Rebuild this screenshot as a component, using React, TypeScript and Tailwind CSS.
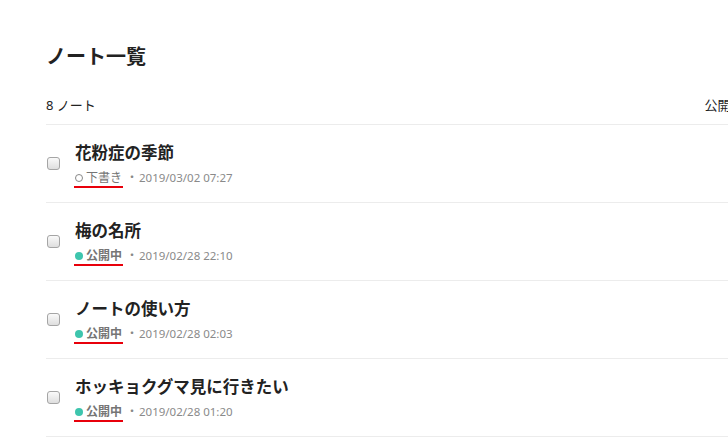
const notes = [
  { title: "花粉症の季節", status: "draft", date: "2019/03/02 07:27" },
  { title: "梅の名所", status: "public", date: "2019/02/28 22:10" },
  { title: "ノートの使い方", status: "public", date: "2019/02/28 02:03" },
  { title: "ホッキョクグマ見に行きたい", status: "public", date: "2019/02/28 01:20" },
];

const NoteRow = ({ note }: { note: (typeof notes)[number] }) => {
  const isDraft = note.status === "draft";
  return (
    <div className="flex h-[78px] items-start border-b border-[#ececec]">
      <div className="ml-[1px] mt-[32px] h-[13px] w-[13px] shrink-0 rounded-[3px] border border-[#a5a5a5] bg-gradient-to-b from-[#fafafa] to-[#dedede]" />
      <div className="ml-[15px] flex flex-col pt-[17px]">
        <p className="text-[16.5px] font-bold leading-[22px] text-[#222]">{note.title}</p>
        <div className="mt-[6px] flex items-start leading-[16px]">
          <span className="-ml-[1px] flex items-center gap-[3px] border-b-2 border-[#e8000b] pl-[1px] pr-[1px] text-[12px] font-bold text-[#757575]">
            {isDraft ? (
              <span className="h-[8px] w-[8px] rounded-full border border-[#888]" />
            ) : (
              <span className="h-[8px] w-[8px] rounded-full bg-[#3ec5ad]" />
            )}
            <span className={isDraft ? "font-normal" : ""}>{isDraft ? "下書き" : "公開中"}</span>
          </span>
          <span className="ml-[3px] text-[12px] text-[#888]">・</span>
          <span className="ml-[1px] text-[11.5px] text-[#8a8a8a]">{note.date}</span>
        </div>
      </div>
    </div>
  );
};

export default function App() {
  return (
    <div
      className="h-[440px] w-[728px] overflow-hidden bg-white"
      style={{ fontFamily: '"Noto Sans", "Noto Sans CJK JP", sans-serif' }}
    >
      <div className="w-[800px] pl-[46px] pt-[42px]">
        <h1 className="text-[20px] font-bold leading-[30px] text-[#222]">ノート一覧</h1>
        <div className="mt-[23px] flex items-center justify-between border-b border-[#ececec] pb-[9px] text-[13px] leading-[20px] text-[#222]">
          <span>8 ノート</span>
          <span className="mr-[33px]">公開日順 ▾</span>
        </div>
        {notes.map((n) => (
          <NoteRow key={n.title} note={n} />
        ))}
      </div>
    </div>
  );
}
